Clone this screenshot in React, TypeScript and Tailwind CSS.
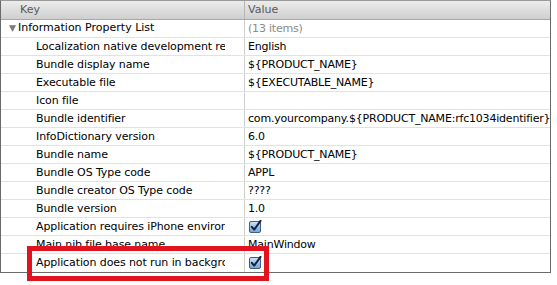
const rows: { key: string; value?: string; check?: boolean }[] = [
  { key: "Localization native development region", value: "English" },
  { key: "Bundle display name", value: "${PRODUCT_NAME}" },
  { key: "Executable file", value: "${EXECUTABLE_NAME}" },
  { key: "Icon file", value: "" },
  { key: "Bundle identifier", value: "com.yourcompany.${PRODUCT_NAME:rfc1034identifier}" },
  { key: "InfoDictionary version", value: "6.0" },
  { key: "Bundle name", value: "${PRODUCT_NAME}" },
  { key: "Bundle OS Type code", value: "APPL" },
  { key: "Bundle creator OS Type code", value: "????" },
  { key: "Bundle version", value: "1.0" },
  { key: "Application requires iPhone environment", check: true },
  { key: "Main nib file base name", value: "MainWindow" },
  { key: "Application does not run in background", check: true },
];

function Checkbox() {
  return (
    <svg width="13" height="13" viewBox="0 0 13 13" className="block">
      <defs>
        <linearGradient id="cb" x1="0" y1="0" x2="0" y2="1">
          <stop offset="0" stopColor="#cfe3f7" />
          <stop offset="1" stopColor="#6ea3d8" />
        </linearGradient>
      </defs>
      <rect x="0.5" y="1.5" width="11" height="11" rx="1.5" fill="url(#cb)" stroke="#3d5f86" />
      <path d="M2.8 6.8 L5.2 9.6 L11.5 0.8" fill="none" stroke="#14233b" strokeWidth="2" strokeLinecap="round" strokeLinejoin="round" />
    </svg>
  );
}

export default function App() {
  return (
    <div
      className="relative w-[557px] h-[285px] bg-white text-[11px] text-black"
      style={{ fontFamily: '"DejaVu Sans", "Liberation Sans", sans-serif' }}
    >
      <div className="w-[551px] border border-[#6a6a6a] border-t-[#9a9a9a]">
        <div className="grid grid-cols-[244px_1fr] h-[19px] bg-gradient-to-b from-[#ececec] to-[#cfcfcf] border-b border-[#a8a8a8] text-[#5a5a5a]">
          <div className="pl-[19px] leading-[18px] border-r border-[#b5b5b5]">Key</div>
          <div className="pl-[3px] leading-[18px]">Value</div>
        </div>
        <div className="grid grid-cols-[244px_1fr] h-[18px] border-b border-[#e2e2e2]">
          <div className="flex items-center border-r border-[#cfcfcf] pl-[8px]">
            <span className="text-[#7a7a7a] text-[9px] mr-[2px]">▼</span>
            <span className="whitespace-nowrap">Information Property List</span>
          </div>
          <div className="pl-[3px] leading-[17px] text-[#8a8a8a] tracking-[-0.2px]">(13 items)</div>
        </div>
        {rows.map((r) => (
          <div key={r.key} className="grid grid-cols-[244px_1fr] h-[18px] border-b border-[#e2e2e2] last:border-b-0">
            <div className="border-r border-[#cfcfcf] pl-[35px] leading-[17px]">
              <div className="w-[189px] overflow-hidden whitespace-nowrap tracking-[-0.1px]">{r.key}</div>
            </div>
            <div className="pl-[3px] leading-[17px] overflow-hidden whitespace-nowrap tracking-[-0.2px]">
              {r.check ? (
                <div className="pt-[2px] pl-[1px]">
                  <Checkbox />
                </div>
              ) : (
                r.value
              )}
            </div>
          </div>
        ))}
      </div>
      <div className="absolute left-[27px] top-[246px] w-[242px] h-[35px] border-[5px] border-[#e0141e]" />
    </div>
  );
}
